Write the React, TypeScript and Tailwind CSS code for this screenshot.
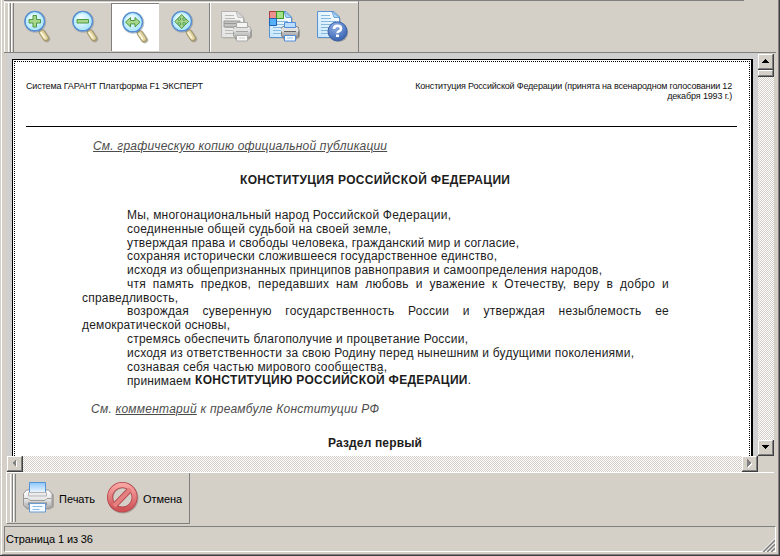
import { useLayoutEffect, useRef, useState, type ReactNode } from "react";

/** A single line of text tracked (or word-spaced) out to a fixed measure. */
function Fit({
  width,
  mode = "letter",
  className = "",
  children,
}: {
  width: number;
  mode?: "letter" | "word";
  className?: string;
  children: ReactNode;
}) {
  const ref = useRef<HTMLSpanElement>(null);
  const [gap, setGap] = useState(0);
  useLayoutEffect(() => {
    const el = ref.current;
    if (!el) return;
    const text = el.textContent ?? "";
    const slots = mode === "word" ? text.split(" ").length - 1 : text.length - 1;
    setGap((width - el.getBoundingClientRect().width) / Math.max(1, slots));
  }, []);
  const style = mode === "word" ? { wordSpacing: gap } : { letterSpacing: gap };
  return (
    <span className={`block whitespace-nowrap ${className}`}>
      <span ref={ref} className={mode === "word" ? "tracking-[0.25px]" : ""} style={gap ? style : undefined}>
        {children}
      </span>
    </span>
  );
}

function Magnifier({ id, children }: { id: string; children: ReactNode }) {
  return (
    <svg width="30" height="35" viewBox="0 0 30 35" className="block shrink-0">
      <defs>
        <radialGradient id={id} cx="0.4" cy="0.35" r="0.7">
          <stop offset="0" stopColor="#f4fdff" />
          <stop offset="0.6" stopColor="#c9effd" />
          <stop offset="1" stopColor="#96dafa" />
        </radialGradient>
      </defs>
      <path d="M21 24l4 6" stroke="#8c8779" strokeWidth="6.5" strokeLinecap="round" opacity="0.55" />
      <path d="M17.500 20.500l1.800 2.200" stroke="#5f97d0" strokeWidth="4.500" />
      <path d="M20 23.600l3.800 5.600" stroke="#a3966a" strokeWidth="6.200" strokeLinecap="round" />
      <path d="M20 23.500l3.600 5.400" stroke="#e0d3a0" strokeWidth="4.400" strokeLinecap="round" />
      <path d="M19.200 23.800l3.400 5" stroke="#fdf8dc" strokeWidth="1.700" strokeLinecap="round" />
      <circle cx="13.200" cy="12.800" r="10.200" fill="none" stroke="#858a91" strokeWidth="1.700" opacity="0.5" />
      <circle cx="12.700" cy="12.200" r="9.700" fill={`url(#${id})`} stroke="#568fd3" strokeWidth="1.700" />
      <circle cx="12.700" cy="12.200" r="8.300" fill="none" stroke="#b5ecff" strokeWidth="1.200" />
      <g fill="#a9d68a" stroke="#4a9a42" strokeWidth="1">
        {children}
      </g>
    </svg>
  );
}

function Sheet({ id, gray }: { id: string; gray?: boolean }) {
  const edge = gray ? "#b3b3b1" : "#5b93d0";
  const ink = gray ? "#b8b8b6" : "#84b8dc";
  return (
    <>
      <defs>
        <linearGradient id={id} x1="1" y1="0" x2="0" y2="1">
          <stop offset="0" stopColor={gray ? "#fafafa" : "#ffffff"} />
          <stop offset="1" stopColor={gray ? "#e1e1df" : "#c5e6fb"} />
        </linearGradient>
      </defs>
      <path d="M2.500 2.500H19l6 6V28.500H2.500z" fill="#817d76" opacity="0.35" />
      <path d="M1.500 1.500H18l5.500 5.500v20.500h-22z" fill={`url(#${id})`} stroke={edge} />
      <path d="M16 1.500l7.500 6h-5.500z" fill={gray ? "#dededc" : "#a7d6f8"} stroke={edge} strokeWidth="0.8" />
      <path
        d="M5 5.500h9M5 8.500h10M5 11.500h15M5 14.500h15M5 17.500h12M5 20.500h12M5 23.500h8"
        stroke={ink}
      />
    </>
  );
}

/** Small printer, drawn over the lower right corner of a sheet. */
function MiniPrinter({ id, gray }: { id: string; gray?: boolean }) {
  const edge = gray ? "#a9a9a8" : "#538dda";
  return (
    <>
      <defs>
        <linearGradient id={id} x1="0" y1="0" x2="0" y2="1">
          <stop offset="0" stopColor={gray ? "#f1f1f0" : "#f7f7f7"} />
          <stop offset="1" stopColor={gray ? "#b4b4b3" : "#969696"} />
        </linearGradient>
      </defs>
      <path d="M14.500 19h16.500q1 0 1 2v6l-3 2.500H15z" fill="#6b6863" opacity="0.5" />
      <path d="M13.500 17.500l3-1.500h11l3 1.500v8.500l-2.500 1.500h-12l-2.500-1.500z" fill={`url(#${id})`} stroke={gray ? "#a0a09f" : "#7d7d7d"} />
      <path d="M16.500 12.500h11v5h-11z" fill={gray ? "#f4f4f3" : "#b9ddff"} stroke={edge} />
      <path d="M13 18.500h17.500v3H13z" fill={gray ? "#e2e2e1" : "#e0e0e0"} />
      <path d="M16 21.500h12" stroke={gray ? "#a5a5a4" : "#666666"} />
      <path d="M16.500 25.500h11v5.500h-11z" fill={gray ? "#f8f8f7" : "#f3faff"} stroke={edge} />
      <path d="M19 28h6" stroke={gray ? "#cfcfce" : "#9dcbee"} />
    </>
  );
}

function PrinterIcon() {
  return (
    <svg width="34" height="34" viewBox="0 0 34 34" className="block shrink-0">
      <defs>
        <linearGradient id="paper" x1="0" y1="0" x2="0" y2="1">
          <stop offset="0" stopColor="#8cc6fb" />
          <stop offset="1" stopColor="#eef8ff" />
        </linearGradient>
        <linearGradient id="shell" x1="0" y1="0" x2="0" y2="1">
          <stop offset="0" stopColor="#ffffff" />
          <stop offset="0.5" stopColor="#e6e6e6" />
          <stop offset="1" stopColor="#a6a6a6" />
        </linearGradient>
      </defs>
      <path d="M2 13l4-3h22l4 4v12l-4 2.500H5z" fill="#77736c" opacity="0.45" />
      <path d="M1.500 12.500l3-3.500h22l3.500 3.500v12l-3 3H4.500l-3-3z" fill="url(#shell)" stroke="#989898" />
      <path d="M7.500 1.500h16v10h-16z" fill="url(#paper)" stroke="#5593d5" />
      <path d="M6.500 11.500h18v3.500h-18z" fill="#ececec" stroke="#b5b5b5" />
      <path d="M2 17.500h4l2 2h15l2-2h4.500" fill="none" stroke="#9b9b9b" />
      <path d="M6 21.500h19v2.500H6z" fill="#8a8a8a" />
      <path d="M7.500 22.500h16v8.500h-16z" fill="#f4faff" stroke="#679bd2" />
      <path d="M10.500 25.500h10M10.500 28.500h7" stroke="#8ab9e4" />
    </svg>
  );
}

function CancelIcon() {
  return (
    <svg width="34" height="34" viewBox="0 0 34 34" className="block shrink-0">
      <defs>
        <linearGradient id="ban" x1="0" y1="0" x2="0" y2="1">
          <stop offset="0" stopColor="#f8a4a2" />
          <stop offset="1" stopColor="#cf5357" />
        </linearGradient>
      </defs>
      <circle cx="17" cy="17" r="12.500" fill="none" stroke="#7a706c" strokeWidth="6" opacity="0.45" />
      <circle cx="16.300" cy="16.300" r="12.300" fill="none" stroke="#b24348" strokeWidth="6" />
      <path d="M8.500 24.500l16-16.500" stroke="#b24348" strokeWidth="6" />
      <circle cx="16.300" cy="16.300" r="12.300" fill="none" stroke="url(#ban)" strokeWidth="4.400" />
      <path d="M8 25l16.500-17" stroke="#e58080" strokeWidth="4" />
    </svg>
  );
}

function Gripper() {
  return (
    <div className="flex">
      <div className="w-[3px] border-l border-r border-l-white border-r-[#808080]" />
      <div className="w-[3px] border-l border-r border-l-white border-r-[#808080]" />
    </div>
  );
}

function ScrollButton({ points, enabled }: { points: string; enabled?: boolean }) {
  return (
    <div className="h-4 w-4 shrink-0 border-r border-b border-[#404040] bg-[#d4d0c8]">
      <div className="h-[15px] w-[15px] border border-t-white border-r-[#808080] border-b-[#808080] border-l-white">
        <svg width="13" height="13" viewBox="0 0 13 13" shapeRendering="crispEdges" className="block">
          {!enabled && <polygon points={points} fill="#fff" transform="translate(1 1)" />}
          <polygon points={points} fill={enabled ? "#000" : "#808080"} />
        </svg>
      </div>
    </div>
  );
}

const track = "bg-[repeating-conic-gradient(#d4d0c8_0_25%,#ffffff_0_50%)] bg-[length:2px_2px]";

type Row = { text: string; width: number; indent?: boolean; short?: boolean; justify?: boolean };

const preamble: Row[] = [
  { text: "Мы, многонациональный народ Российской Федерации,", width: 324, indent: true },
  { text: "соединенные общей судьбой на своей земле,", width: 264, indent: true },
  { text: "утверждая права и свободы человека, гражданский мир и согласие,", width: 392, indent: true, short: true },
  { text: "сохраняя исторически сложившееся государственное единство,", width: 370, indent: true },
  { text: "исходя из общепризнанных принципов равноправия и самоопределения народов,", width: 475, indent: true },
  { text: "чтя память предков, передавших нам любовь и уважение к Отечеству, веру в добро и", width: 542, indent: true, justify: true },
  { text: "справедливость,", width: 96, short: true },
  { text: "возрождая суверенную государственность России и утверждая незыблемость ее", width: 542, indent: true, justify: true },
  { text: "демократической основы,", width: 148 },
  { text: "стремясь обеспечить благополучие и процветание России,", width: 341, indent: true },
  { text: "исходя из ответственности за свою Родину перед нынешним и будущими поколениями,", width: 507, indent: true },
  { text: "сознавая себя частью мирового сообщества,", width: 260, indent: true },
];

function DocumentPage() {
  return (
    <div className="h-[500px] w-[741px] shrink-0 border-t border-r-2 border-l border-black bg-white p-px">
      <div className="h-full border border-dotted border-black font-['Liberation_Sans',Arial,sans-serif]">
        <header className="ml-[11px] flex h-[65px] w-[711px] justify-between border-b border-black pt-[19px] text-[9px] leading-[10px] text-[#111]">
          <Fit width={177}>Система ГАРАНТ Платформа F1 ЭКСПЕРТ</Fit>
          <div className="flex flex-col items-end pr-[5px]">
            <Fit width={317}>Конституция Российской Федерации (принята на всенародном голосовании 12</Fit>
            <Fit width={65}>декабря 1993 г.)</Fit>
          </div>
        </header>
        <div className="text-[12px] leading-[14px] text-[#1c1c1c]">
          <div className="mt-3 ml-[78px] h-[14px] text-[#4c4c4c] italic">
            <Fit width={294} className="underline">См. графическую копию официальной публикации</Fit>
          </div>
          <h1 className="mt-5 ml-[225px] h-[14px] font-bold">
            <Fit width={270}>КОНСТИТУЦИЯ РОССИЙСКОЙ ФЕДЕРАЦИИ</Fit>
          </h1>
          <div className="mt-[21px] ml-[67px]">
            {preamble.map((row) => (
              <div key={row.text} className={`${row.short ? "h-[13px]" : "h-[14px]"} ${row.indent ? "pl-[45px]" : ""}`}>
                <Fit width={row.width} mode={row.justify ? "word" : "letter"}>{row.text}</Fit>
              </div>
            ))}
            <div className="flex h-[14px] gap-1 pl-[45px]">
              <Fit width={64}>принимаем</Fit>
              <Fit width={276} className="-mt-px">
                <b>КОНСТИТУЦИЮ РОССИЙСКОЙ ФЕДЕРАЦИИ</b>.
              </Fit>
            </div>
          </div>
          <div className="mt-[14px] ml-[76px] h-[14px] text-[#4c4c4c] italic">
            <Fit width={288}>
              См. <u>комментарий</u> к преамбуле Конституции РФ
            </Fit>
          </div>
          <h2 className="mt-5 ml-[313px] font-bold">
            <Fit width={94}>Раздел первый</Fit>
          </h2>
        </div>
      </div>
    </div>
  );
}

export default function App() {
  return (
    <div className="h-[556px] w-[780px] overflow-hidden border-r border-b border-[#404040] bg-[#d4d0c8] pl-px font-['Liberation_Sans',Arial,sans-serif] text-black">
      <div className="flex h-[555px] flex-col border-r border-b border-l border-r-[#808080] border-b-[#808080] border-l-white pl-[2px]">
        <div className="h-px w-[740px] shrink-0 bg-[#808080]" />
        <div className="flex h-[52px] w-[772px] shrink-0 border-b border-[#808080]">
          <div className="flex w-[355px] border-r border-l border-r-[#808080] border-l-white">
            <div className="mt-px flex w-full border-t border-white">
              <div className="flex pl-[3px]">
                <Gripper />
              </div>
              <div className="ml-[8px] pt-[6px]">
                <Magnifier id="lens-in">
                  <path d="M11 6.500h3.500V10.500h4V14h-4v4H11v-4H7v-3.500h4z" />
                </Magnifier>
              </div>
              <div className="ml-[18px] pt-[6px]">
                <Magnifier id="lens-out">
                  <path d="M7 10.500h11.500V14H7z" />
                </Magnifier>
              </div>
              <div className="ml-[11px] h-[48px] w-[48px] border-t border-l border-[#808080] bg-white pt-[6px] pl-[8px]">
                <Magnifier id="lens-width">
                  <path d="M5.500 12.200l5-4.700v3h4.500v-3l5 4.700-5 4.700v-3h-4.500v3z" />
                </Magnifier>
              </div>
              <div className="ml-[10px] pt-[6px]">
                <Magnifier id="lens-page">
                  <path d="M12.700 5.500l3.300 3.500h-2v2.200h2.200v-2l3.500 3.300-3.500 3.300v-2H14v2.200h2l-3.300 3.500L9.400 16h2v-2.200H9.200v2l-3.500-3.300 3.500-3.300v2h2.200V9h-2z" />
                </Magnifier>
              </div>
              <div className="ml-[10px] w-[2px] border-r border-l border-r-white border-l-[#808080]" />
              <svg width="34" height="34" viewBox="0 0 34 34" className="mt-[7px] ml-[9px] shrink-0">
                <Sheet id="sheet-1" gray />
                <path d="M4 11h16v6H4z" fill="#c3c3c1" stroke="#999" />
                <path d="M4 13.500h15" stroke="#999" />
                <MiniPrinter id="printer-1" gray />
              </svg>
              <svg width="34" height="34" viewBox="0 0 34 34" className="mt-[7px] ml-[14px] shrink-0">
                <Sheet id="sheet-2" />
                <path d="M1.500 1.500h7v7h-7z" fill="#ed9090" stroke="#a83e3e" />
                <path d="M8.500 1.500h7v7h-7z" fill="#a4e28a" stroke="#3b9422" />
                <path d="M1.500 8.500h7v7h-7z" fill="#55b1fa" stroke="#1c61b2" />
                <MiniPrinter id="printer-2" />
              </svg>
              <svg width="34" height="34" viewBox="0 0 34 34" className="mt-[7px] ml-[14px] shrink-0">
                <Sheet id="sheet-3" />
                <defs>
                  <radialGradient id="help" cx="0.4" cy="0.25" r="0.8">
                    <stop offset="0" stopColor="#91b0e7" />
                    <stop offset="1" stopColor="#345fae" />
                  </radialGradient>
                </defs>
                <circle cx="22.300" cy="22.300" r="9.800" fill="#595d67" opacity="0.5" />
                <circle cx="21.500" cy="21.300" r="9.500" fill="url(#help)" stroke="#3861a9" />
                <path d="M18 19q0-3.200 3.500-3.200T25 18.700q0 1.600-1.800 2.500t-1.700 2" fill="none" stroke="#fff" strokeWidth="2.600" />
                <path d="M20 24.500h3v2.500h-3z" fill="#fff" />
              </svg>
            </div>
          </div>
        </div>

        <div className="ml-[3px] flex h-[419px] shrink-0">
          <div className="w-[751px]">
            <div className="h-[403px] overflow-hidden bg-[#d0d0d0] pt-[6px] pl-[5px]">
              <DocumentPage />
            </div>
            <div className={`flex h-4 justify-between ${track}`}>
              <ScrollButton points="8,2 8,10 4,6" />
              <ScrollButton points="4,2 4,10 8,6" />
            </div>
          </div>
          <div className="w-4 pt-px">
            <div className={`flex h-[402px] flex-col ${track}`}>
              <ScrollButton points="2,8 10,8 6,4" enabled />
              <div className="h-[7px] shrink-0 border-r border-b border-[#404040] bg-[#d4d0c8]">
                <div className="h-full border border-t-white border-r-[#808080] border-b-[#808080] border-l-white" />
              </div>
              <div className="grow" />
              <ScrollButton points="2,4 10,4 6,8" enabled />
            </div>
          </div>
        </div>

        <div className="ml-[2px] h-[52px] w-[768px] shrink-0 border-t border-white">
          <div className="flex h-[51px] w-[184px] border-r border-b border-l border-r-[#808080] border-b-[#808080] border-l-white pt-px pb-px pl-[3px]">
            <Gripper />
            <div className="mt-[7px] ml-[6px]">
              <PrinterIcon />
            </div>
            <div className="mt-[18px] ml-[3px] w-[36px] text-[11px] leading-[14px]">
              <Fit width={36}>Печать</Fit>
            </div>
            <div className="mt-[7px] ml-[11px]">
              <CancelIcon />
            </div>
            <div className="mt-[18px] ml-[3px] text-[11px] leading-[14px]">
              <Fit width={39}>Отмена</Fit>
            </div>
          </div>
        </div>

        <div className="mt-[2px] flex h-[26px] w-[772px] shrink-0 justify-between border border-t-[#808080] border-r-white border-b-white border-l-[#808080] pt-[5px] text-[11px] leading-[14px]">
          <Fit width={87} className="pl-px">Страница 1 из 36</Fit>
          <svg width="14" height="14" viewBox="0 0 14 14" className="mt-[6px]">
            <path d="M2 14L14 2M6 14l8-8M10 14l4-4" stroke="#808080" strokeWidth="1.800" />
            <path d="M0.500 14L14 0.500M4.500 14L14 4.500M8.500 14L14 8.500" stroke="#fff" />
          </svg>
        </div>
      </div>
    </div>
  );
}
